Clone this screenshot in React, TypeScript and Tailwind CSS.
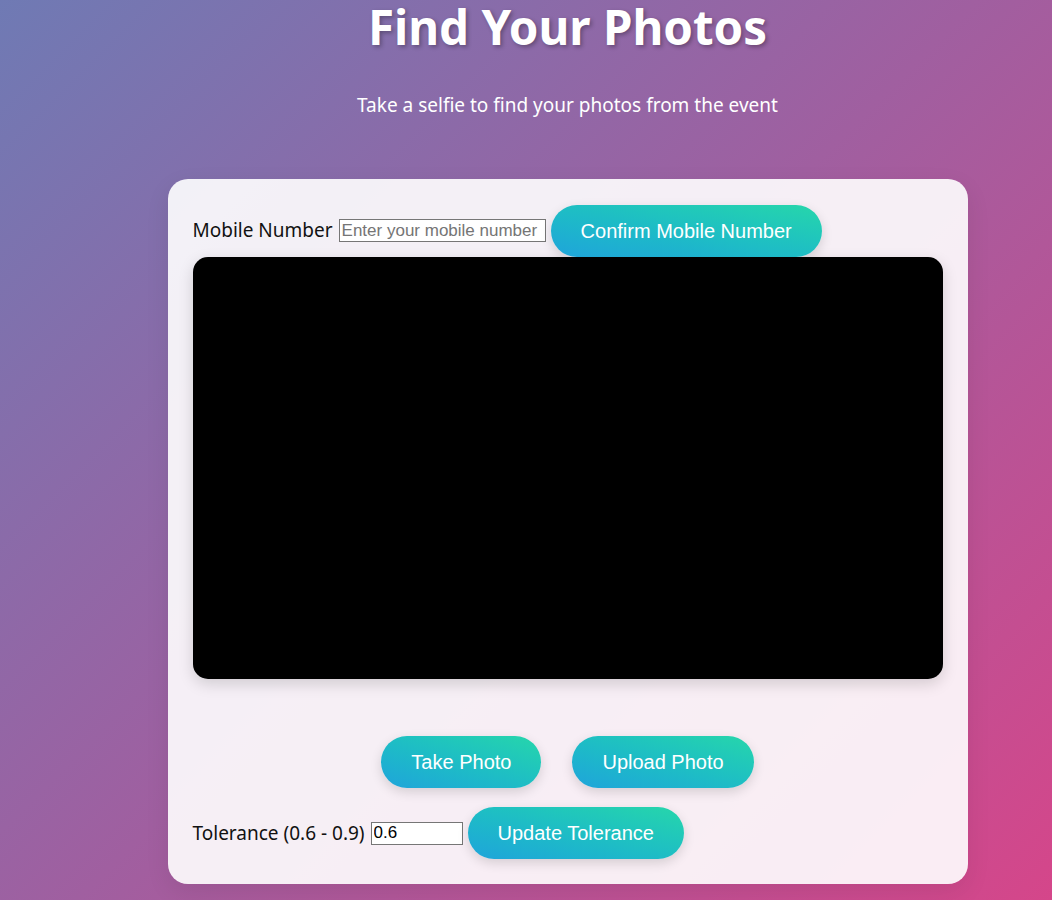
import React from "react";

const btn =
  "h-[52px] px-[30px] rounded-full text-white text-[20px] font-['Liberation_Sans',Arial,sans-serif] bg-linear-to-tr from-[#20a4da] to-[#27d6aa] shadow-[0_4px_12px_rgba(0,0,0,0.14)] whitespace-nowrap";

const input =
  "h-[23px] border border-[#767676] bg-white px-[2px] py-0 text-[17px] text-black font-['Liberation_Sans',Arial,sans-serif] placeholder:text-[#757575] outline-none";

export default function App() {
  return (
    <div className="min-h-screen bg-[linear-gradient(135deg,#6f7ab4_0%,#a05fa0_50%,#d5468a_100%)] font-['Noto_Sans',sans-serif] flex flex-col items-center pl-[83px]">
      {/* Header */}
      <h1 className="text-[47.5px] leading-[53px] font-bold text-white [text-shadow:2px_2px_4px_rgba(0,0,0,0.3)]">
        Find Your Photos
      </h1>
      <p className="mt-[40px] text-[19px] leading-[24px] text-white">
        Take a selfie to find your photos from the event
      </p>

      {/* Card */}
      <div className="mt-[62px] w-[800px] rounded-[20px] bg-white/90 p-[25px] shadow-[0_8px_24px_rgba(0,0,0,0.08)]">
        <div className="flex items-center h-[53px] text-[19px] text-[#111]">
          <span>Mobile Number</span>
          <input
            className={`${input} ml-[6px] w-[207px]`}
            placeholder="Enter your mobile number"
          />
          <button className={`${btn} ml-[5px]`}>Confirm Mobile Number</button>
        </div>

        {/* Camera preview */}
        <div className="h-[422px] w-full rounded-[15px] bg-black shadow-[0_5px_15px_rgba(0,0,0,0.15)]" />

        <div className="mt-[57px] flex justify-center gap-[31px]">
          <button className={btn}>Take Photo</button>
          <button className={btn}>Upload Photo</button>
        </div>

        <div className="mt-[19px] flex items-center text-[19px] text-[#111]">
          <span>Tolerance (0.6 - 0.9)</span>
          <input className={`${input} ml-[6px] w-[92px]`} defaultValue="0.6" />
          <button className={`${btn} ml-[5px]`}>Update Tolerance</button>
        </div>
      </div>
    </div>
  );
}
